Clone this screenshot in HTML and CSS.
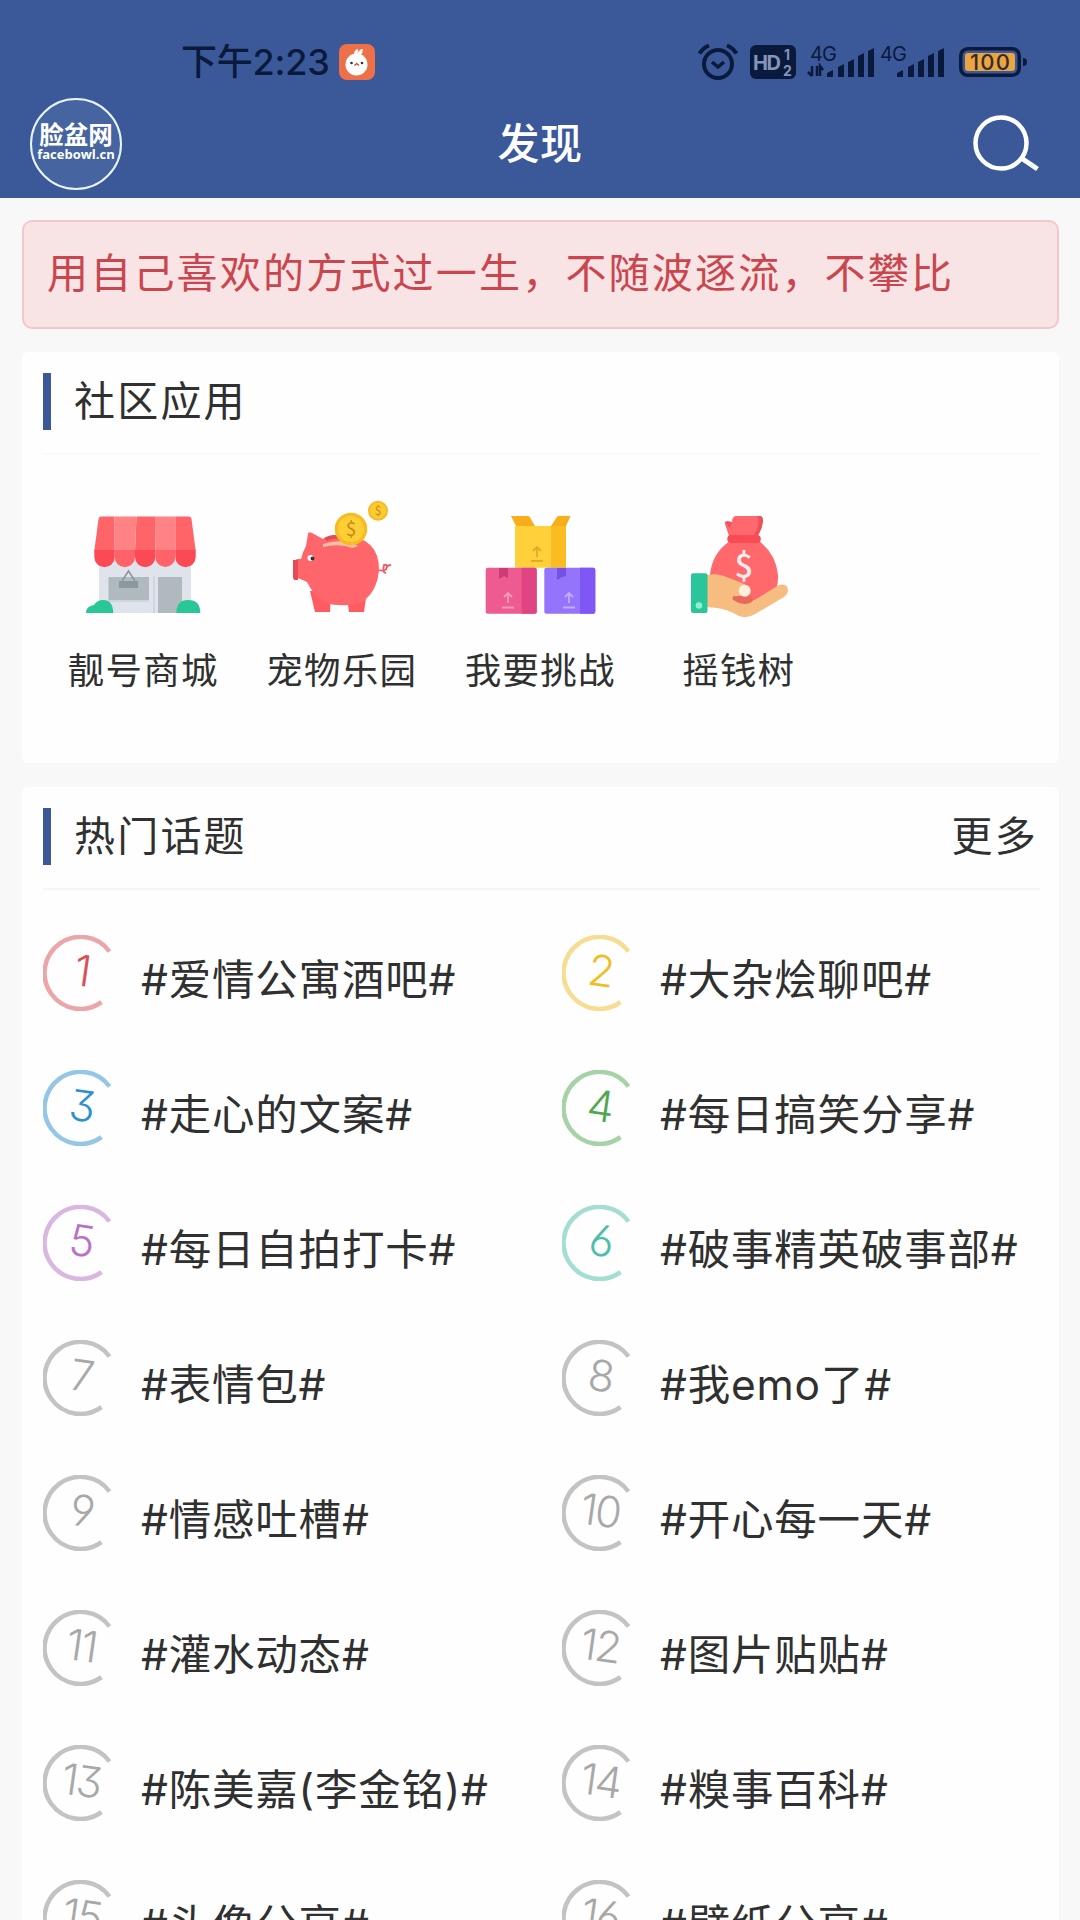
FILE: index.html
```html
<!DOCTYPE html>
<html lang="zh-CN">
<head>
    <meta charset="UTF-8">
    <meta name="viewport" content="width=device-width, initial-scale=1.0">
    <title>发现 - 脸盆网</title>
    <link rel="stylesheet" href="styles.css">
</head>
<body>
    <!-- 圆环图标 -->
    <svg width="0" height="0" class="defs">
        <symbol id="ring" viewBox="0 0 76 76">
            <path d="M66.5 16.5A36 36 0 1 0 58.500 67.200" fill="none" stroke="currentColor" stroke-width="4.500"/>
        </symbol>
    </svg>

    <header class="header">
        <div class="status-bar">
            <div class="status-left">
                <span class="time">下午2:23</span>
                <svg class="app-badge" viewBox="0 0 36 36" width="36" height="36">
                    <rect width="36" height="36" rx="8" fill="#ee7048"/>
                    <path d="M15 12Q15 5 19 5Q19 8 18.500 10Q20 5 24 5Q24 9 21 12Z" fill="#fff"/>
                    <circle cx="17.500" cy="20.500" r="11" fill="#fff"/>
                    <circle cx="12.500" cy="19" r="1.300" fill="#333"/>
                    <circle cx="23" cy="19" r="1.300" fill="#333"/>
                    <path d="M15.500 21.500l2.200-2 2.200 2" fill="none" stroke="#a44" stroke-width="1.200"/>
                </svg>
            </div>
            <div class="status-right">
                <svg viewBox="0 0 40 36" width="40" height="36">
                    <g fill="none" stroke="#091a3d">
                        <circle cx="20" cy="20" r="14" stroke-width="4"/>
                        <path d="M1.500 9.500Q5 4 11 1.500M29 1.500Q35 4 38.500 9.500" stroke-width="4"/>
                        <path d="M14 18l6 5 6-5" stroke-width="3.500"/>
                    </g>
                </svg>
                <svg class="hd" viewBox="0 0 46 34" width="46" height="34">
                    <rect width="46" height="34" rx="6" fill="#091a3d"/>
                    <text x="3" y="24.500" font-size="20" font-weight="700" textLength="28">HD</text>
                    <text x="34" y="15" font-size="14" font-weight="700">1</text>
                    <text x="33" y="31" font-size="14" font-weight="700">2</text>
                </svg>
                <svg class="signal" viewBox="0 0 67 34" width="67" height="34">
                    <text x="2" y="16" font-size="20" textLength="27">4G</text>
                    <path d="M4 21v10M0 27l4 4M9 31V21M12 31V21l3 4" fill="none" stroke="#091a3d" stroke-width="2.500"/>
                    <path d="M19 32v-4l6-3v7zM30 32V22l6-3v13zM40 32V17l6-3v18zM50 32V11l6-3v24zM60 32V6l6-3v29z"/>
                </svg>
                <svg class="signal second" viewBox="0 0 65 34" width="65" height="34">
                    <text x="0" y="16" font-size="20" textLength="27">4G</text>
                    <path d="M17 32v-4l6-3v7zM28 32V22l6-3v13zM38 32V17l6-3v18zM48 32V11l6-3v24zM58 32V6l6-3v29z"/>
                </svg>
                <svg class="battery" viewBox="0 0 69 30" width="69" height="30">
                    <rect x="1.750" y="1.750" width="58.500" height="26.500" rx="7" fill="none" stroke="#091a3d" stroke-width="3.500"/>
                    <rect x="6" y="6" width="50" height="18" rx="3" fill="#e8a541"/>
                    <path d="M64 11q4 0 4 4t-4 4z" fill="#091a3d"/>
                    <text x="11" y="23" font-size="22" font-weight="500" textLength="40">100</text>
                </svg>
            </div>
        </div>
        <div class="nav-bar">
            <div class="logo">
                <span class="logo-name">脸盆网</span>
                <span class="logo-url">facebowl.cn</span>
            </div>
            <h1>发现</h1>
            <svg class="search" viewBox="0 0 66 60" width="66" height="60">
                <circle cx="28" cy="28" r="25.500" fill="none" stroke="#fff" stroke-width="4.500"/>
                <path d="M47.500 42.500l17 11.500" stroke="#fff" stroke-width="5"/>
            </svg>
        </div>
    </header>

    <main>
        <div class="notice">用自己喜欢的方式过一生，不随波逐流，不攀比</div>

        <section class="card apps-card">
            <div class="card-title">
                <h2>社区应用</h2>
            </div>
            <div class="apps">
                <div class="app">
                    <!-- 商店 -->
                    <svg viewBox="0 0 120 120" width="120" height="120">
                        <path d="M16 60h92v54H16z" fill="#dfe3eb"/>
                        <path d="M25.500 78H66v24H25.500zM75 78h24v36H75z" fill="#b0b9be"/>
                        <path d="M26 102h40M71 114V77" stroke="#cfd5e3" stroke-width="2"/>
                        <path d="M39 82l6.500-10 6.500 10" fill="none" stroke="#8a959b" stroke-width="1.500"/>
                        <path d="M36 82h19v7H36z" fill="#8a979d"/>
                        <path d="M18 17.500h13.500L31.700 52H11.300L15.500 20q.5-2.500 2.500-2.500zM53.500 17.500H72l.3 34.500H52zM92.300 17.500h13.700q2 0 2.500 2.500l4.200 32H92.300z" fill="#ff6469"/>
                        <path d="M31.500 17.500h22L52 52H31.700zM72 17.500h20.300V52h-20z" fill="#ff8285"/>
                        <path d="M11.300 51h20.400v7a10.200 10.200 0 0 1-20.400 0zM52 51h20.300v7A10.150 10.150 0 0 1 52 58zM92.300 51h20.400v7a10.200 10.200 0 0 1-20.400 0z" fill="#fb4a55"/>
                        <path d="M31.700 51H52v7a10.150 10.150 0 0 1-20.300 0zM72.300 51h20v7a10 10 0 0 1-20 0z" fill="#ff6268"/>
                        <path d="M3 114q0-7 8-8 3-5 9-5 10 0 10.300 13zM93.300 114q0-13 12-13t12 13z" fill="#29c797"/>
                    </svg>
                    <span>靓号商城</span>
                </div>
                <div class="app">
                    <!-- 存钱罐 -->
                    <svg viewBox="0 0 120 120" width="120" height="120">
                        <path d="M28 92h21l-1 21H33zM64 92h21l-3 21H67z" fill="#ff5c61"/>
                        <path d="M24 47l2-12q0-3 4-1l11 6Q49 35 60 36q38 2 37 36-2 19-14 29-9 6-25 5-21 1-33-23l-9-4q-3 0-3-3V63q0-3 3-3h3q2-8 5-13z" fill="#ff666b"/>
                        <path d="M11 61h5v20h-3q-2 0-2-3zM42 39q8-5 18-2l-3 3q-6-1-12 2z" fill="#e64b55"/>
                        <path d="M41 48v-3q14-5 31-1l4 3-5 2q-15-5-30-1z" fill="#ffc0a5"/>
                        <path d="M97 71q7 2 8-3 0-3-3-2-2 8 2 8M104 67l5-1" fill="none" stroke="#ee5960" stroke-width="1.800"/>
                        <circle cx="28.500" cy="59" r="3" fill="#fff"/>
                        <circle cx="30.500" cy="59.500" r="2" fill="#333"/>
                        <circle cx="69" cy="30" r="16.300" fill="#f5bd22"/>
                        <circle cx="69" cy="30" r="13" fill="#fdce35"/>
                        <text x="69" y="37" font-size="19" fill="#c6891c" text-anchor="middle">$</text>
                        <circle cx="96" cy="11.700" r="10" fill="#f3bc2a"/>
                        <circle cx="96" cy="11.700" r="8" fill="#fcca32"/>
                        <text x="96" y="16" font-size="12" fill="#c6891c" text-anchor="middle">$</text>
                    </svg>
                    <span>宠物乐园</span>
                </div>
                <div class="app">
                    <!-- 箱子 -->
                    <svg viewBox="0 0 120 120" width="120" height="120">
                        <path d="M35 27h51v41.700H35z" fill="#ffd03a"/>
                        <path d="M71 27h15v41.700H71z" fill="#fbbb22"/>
                        <path d="M31 17h17q1.500 0 2.300 2L55 27H36zM90.500 17H78.500q-1.500 0-2.300 2L71 27h15z" fill="#f7ae18"/>
                        <rect x="5.700" y="68.700" width="51" height="46" rx="2" fill="#ee5b90"/>
                        <path d="M41.700 68.700h13q2 0 2 2v42q0 2-2 2h-13z" fill="#e04482"/>
                        <rect x="64.300" y="68.700" width="51" height="46" rx="2" fill="#9474fa"/>
                        <path d="M100 68.700h13q2.300 0 2.300 2v42q0 2-2.300 2h-13z" fill="#8057f5"/>
                        <path d="M19 69h9v10l-4-2-5 3z" fill="#cf3b76"/>
                        <path d="M77 69h9v8l-4 1-5 3z" fill="#7550e5"/>
                        <g fill="none" stroke-width="1.800">
                            <path d="M57 48v10M53 52l4-4 4 4M51 62h12" stroke="#e5a928"/>
                            <path d="M28 94v10M24 98l4-4 4 4M22 108.500h12" stroke="#f49abb"/>
                            <path d="M89 94v10M85 98l4-4 4 4M83 108.500h12" stroke="#c4aeff"/>
                        </g>
                    </svg>
                    <span>我要挑战</span>
                </div>
                <div class="app">
                    <!-- 钱袋 -->
                    <svg viewBox="0 0 120 120" width="120" height="120">
                        <path d="M50 37L46 25q-1-3 3-3l4 1q0-6 4-6h23q4 0 4 5-1 8-5 15z" fill="#ff686d"/>
                        <path d="M78 17h3q3 0 3 5-1 8-5 14h-4q7-11 3-19zM46 23h7l-2 6z" fill="#ed5159"/>
                        <path d="M51 42h29q17 13 19 34 1 22-18 28-18 7-39-3Q30 92 31 76q2-22 20-34z" fill="#ff686d"/>
                        <rect x="48.300" y="36" width="33.500" height="8" rx="4" fill="#f84b54"/>
                        <text x="65" y="79" font-size="33" font-weight="500" fill="#ffeceb" text-anchor="middle">$</text>
                        <path d="M28 76q10-2 17 1l18 7q6 2 7 8-2 6-9 5-6 0-8 3 5 4 12 3 8 0 14-4l21-13q8-2 9 5 0 4-4 7L76 115q-8 5-16 2-12-7-22-8l-10-1z" fill="#f7bd80"/>
                        <path d="M54 97q9 1 13-3l4 3q6 4 0 7-10 3-17-4z" fill="#e9685c"/>
                        <circle cx="65.700" cy="91.700" r="6" fill="#fff0db"/>
                        <rect x="12" y="74.300" width="16.500" height="39.700" rx="2" fill="#2ac59a"/>
                        <circle cx="20" cy="106.500" r="3.300" fill="#8ef0cc"/>
                    </svg>
                    <span>摇钱树</span>
                </div>
            </div>
        </section>

        <section class="card topics-card">
            <div class="card-title">
                <h2>热门话题</h2>
                <a class="more">更多</a>
            </div>
            <div class="topics">
                <div class="topic"><div class="rank red"><svg><use href="#ring"/></svg><b>1</b></div>#爱情公寓酒吧#</div>
                <div class="topic"><div class="rank yellow"><svg><use href="#ring"/></svg><b>2</b></div>#大杂烩聊吧#</div>
                <div class="topic"><div class="rank blue"><svg><use href="#ring"/></svg><b>3</b></div>#走心的文案#</div>
                <div class="topic"><div class="rank green"><svg><use href="#ring"/></svg><b>4</b></div>#每日搞笑分享#</div>
                <div class="topic"><div class="rank purple"><svg><use href="#ring"/></svg><b>5</b></div>#每日自拍打卡#</div>
                <div class="topic"><div class="rank teal"><svg><use href="#ring"/></svg><b>6</b></div>#破事精英破事部#</div>
                <div class="topic"><div class="rank"><svg><use href="#ring"/></svg><b>7</b></div>#表情包#</div>
                <div class="topic"><div class="rank"><svg><use href="#ring"/></svg><b>8</b></div>#我emo了#</div>
                <div class="topic"><div class="rank"><svg><use href="#ring"/></svg><b>9</b></div>#情感吐槽#</div>
                <div class="topic"><div class="rank"><svg><use href="#ring"/></svg><b>10</b></div>#开心每一天#</div>
                <div class="topic"><div class="rank"><svg><use href="#ring"/></svg><b>11</b></div>#灌水动态#</div>
                <div class="topic"><div class="rank"><svg><use href="#ring"/></svg><b>12</b></div>#图片贴贴#</div>
                <div class="topic"><div class="rank"><svg><use href="#ring"/></svg><b>13</b></div>#陈美嘉(李金铭)#</div>
                <div class="topic"><div class="rank"><svg><use href="#ring"/></svg><b>14</b></div>#糗事百科#</div>
                <div class="topic"><div class="rank"><svg><use href="#ring"/></svg><b>15</b></div>#头像分享#</div>
                <div class="topic"><div class="rank"><svg><use href="#ring"/></svg><b>16</b></div>#壁纸分享#</div>
            </div>
        </section>
    </main>
</body>
</html>
```
FILE: styles.css
```css
* {
    margin: 0;
    padding: 0;
    box-sizing: border-box;
}

body {
    font-family: "Noto Sans CJK SC", sans-serif;
    background: #f8f8f8;
    color: #303030;
    height: 1920px;
    overflow: hidden;
}

svg {
    display: block;
    flex-shrink: 0;
    overflow: visible;
}

.defs {
    position: absolute;
}

/* 顶部 */
.header {
    height: 198px;
    background: #3b5998;
    color: #fff;
}

.status-bar {
    height: 98px;
    padding: 26px 52px 0 181px;
    display: flex;
    justify-content: space-between;
}

.status-left,
.status-right {
    height: 72px;
    display: flex;
    align-items: center;
}

.status-left {
    gap: 9px;
}

.time {
    font-family: Inter, "Noto Sans CJK SC", sans-serif;
    font-size: 36px;
    font-weight: 500;
    line-height: 72px;
    color: #091a3d;
    letter-spacing: -0.2px;
}

.status-right {
    font-family: Inter, sans-serif;
    fill: #091a3d;
}

.hd {
    margin-left: 12px;
}

.hd text {
    fill: #8494ba;
}

.signal {
    margin-left: 12px;
}

.second {
    margin-left: 5px;
}

.battery {
    margin-left: 14px;
}

.battery text {
    fill: #3a2a25;
}

.nav-bar {
    height: 92px;
    padding: 0 42px 0 30px;
    display: grid;
    grid-template-columns: 1fr auto 1fr;
    align-items: center;
}

.logo {
    width: 92px;
    height: 92px;
    padding-bottom: 6px;
    border: 2px solid #e8f4ff;
    border-radius: 50%;
    background: #4665a0;
    display: flex;
    flex-direction: column;
    align-items: center;
    justify-content: center;
    white-space: nowrap;
}

.logo-name {
    font-size: 24.5px;
    font-weight: 700;
    line-height: 25px;
}

.logo-url {
    font-family: "Open Sans", sans-serif;
    font-size: 13px;
    font-weight: 700;
    line-height: 16px;
}

.nav-bar h1 {
    font-size: 42px;
    font-weight: 500;
    line-height: 60px;
    letter-spacing: 0.5px;
    margin-left: 12px;
    margin-top: -7px;
}

.search {
    justify-self: end;
    margin-top: 2px;
    margin-right: -1px;
}

/* 公告 */
main {
    padding: 22px 21px 0 22px;
}

.notice {
    height: 109px;
    padding-left: 23px;
    border: 2px solid #f5c6cb;
    border-radius: 10px;
    background: #f8e3e5;
    color: #ca464e;
    font-size: 41px;
    line-height: 96px;
    letter-spacing: 2.2px;
    white-space: nowrap;
}

.card {
    background: #fefefe;
    border-radius: 6px;
    padding: 0 19px 0 21px;
}

.apps-card {
    height: 411px;
    margin-top: 23px;
}

.topics-card {
    height: 1200px;
    margin-top: 24px;
}

.card-title {
    height: 103px;
    padding-top: 21px;
    display: flex;
    justify-content: space-between;
    border-bottom: 2px solid #f5f5f5;
    font-size: 41px;
    line-height: 51px;
    letter-spacing: 2.2px;
}

.apps-card .card-title {
    border-bottom-color: #fafafa;
}

.card-title h2 {
    height: 57px;
    padding-left: 23px;
    border-left: 8px solid #3b5998;
    font-size: 41px;
    font-weight: 400;
}

.more {
    margin-right: 2px;
}

/* 应用 */
.apps {
    display: grid;
    grid-template-columns: repeat(5, 198.5px);
    padding: 44px 0 0 1px;
}

.app {
    display: flex;
    flex-direction: column;
    align-items: center;
}

.app span {
    margin-top: 24px;
    font-size: 36.5px;
    line-height: 52px;
    letter-spacing: 1.2px;
}

/* 话题 */
.topics {
    display: grid;
    grid-template-columns: 519px 1fr;
    grid-auto-rows: 135px;
    padding-top: 45px;
}

.topic {
    height: 92px;
    display: flex;
    align-items: flex-start;
    font-family: Inter, "Noto Sans CJK SC", sans-serif;
    font-size: 42.5px;
    line-height: 90px;
    letter-spacing: 0.8px;
    white-space: nowrap;
}

.rank {
    width: 76px;
    height: 76px;
    margin-right: 22px;
    color: #a8a8a8;
    display: grid;
    place-items: center;
}

.rank svg,
.rank b {
    grid-area: 1 / 1;
}

.rank svg {
    width: 76px;
    height: 76px;
    opacity: 0.68;
}

.rank b {
    font-size: 43px;
    font-weight: 350;
    line-height: 70px;
    height: 76px;
    letter-spacing: -2px;
    font-feature-settings: "cv09", "cv03", "cv04";
    transform: rotate(8deg);
}

.red svg,
.yellow svg,
.blue svg,
.green svg,
.purple svg,
.teal svg {
    opacity: 0.5;
}

.red { color: #db4f56; }
.yellow { color: #f0bd26; }
.blue { color: #2e90cf; }
.green { color: #4ea850; }
.purple { color: #b873c4; }
.teal { color: #4dbda8; }
```
